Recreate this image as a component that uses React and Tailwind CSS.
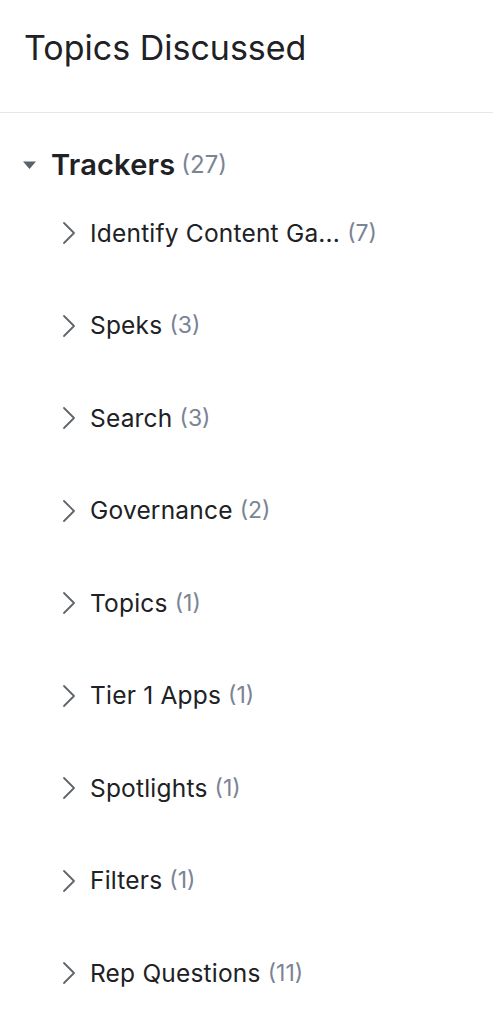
const trackers = [
  { name: "Identify Content Ga...", count: 7 },
  { name: "Speks", count: 3 },
  { name: "Search", count: 3 },
  { name: "Governance", count: 2 },
  { name: "Topics", count: 1 },
  { name: "Tier 1 Apps", count: 1 },
  { name: "Spotlights", count: 1 },
  { name: "Filters", count: 1 },
  { name: "Rep Questions", count: 11 },
];

const Chevron = () => (
  <svg width="16" height="24" viewBox="0 0 16 24" className="shrink-0">
    <path d="M3 2 L13 12 L3 22" fill="none" stroke="#60656c" strokeWidth="1.8" strokeLinecap="round" strokeLinejoin="round" />
  </svg>
);

export default function App() {
  return (
    <div className="w-[493px] h-[1024px] bg-white overflow-hidden font-['Inter',sans-serif] text-[#202124]">
      <div className="h-[113px] border-b border-[#e6e6e6] pl-[24px] pt-[25px]">
        <h1 className="text-[34px] leading-[46px] font-normal">Topics Discussed</h1>
      </div>
      <div className="pt-[34px]">
        <div className="flex items-center pl-[22px] h-[36px]">
          <svg width="15" height="10" viewBox="0 0 15 10" className="shrink-0">
            <path d="M1 1.5 L14 1.5 L7.5 9 Z" fill="#5a6270" />
          </svg>
          <span className="ml-[14px] text-[29px] font-semibold tracking-[0.2px]">Trackers</span>
          <span className="ml-[6px] text-[24px] text-[#7a8494]">(27)</span>
        </div>
        <ul className="mt-[34px] flex flex-col gap-[60.5px]">
          {trackers.map((t) => (
            <li key={t.name} className="flex items-center h-[32px] pl-[61px]">
              <Chevron />
              <span className="ml-[13px] text-[24.5px] tracking-[0.2px]">{t.name}</span>
              <span className="ml-[7px] text-[23px] text-[#7a8494]">({t.count})</span>
            </li>
          ))}
        </ul>
      </div>
    </div>
  );
}
